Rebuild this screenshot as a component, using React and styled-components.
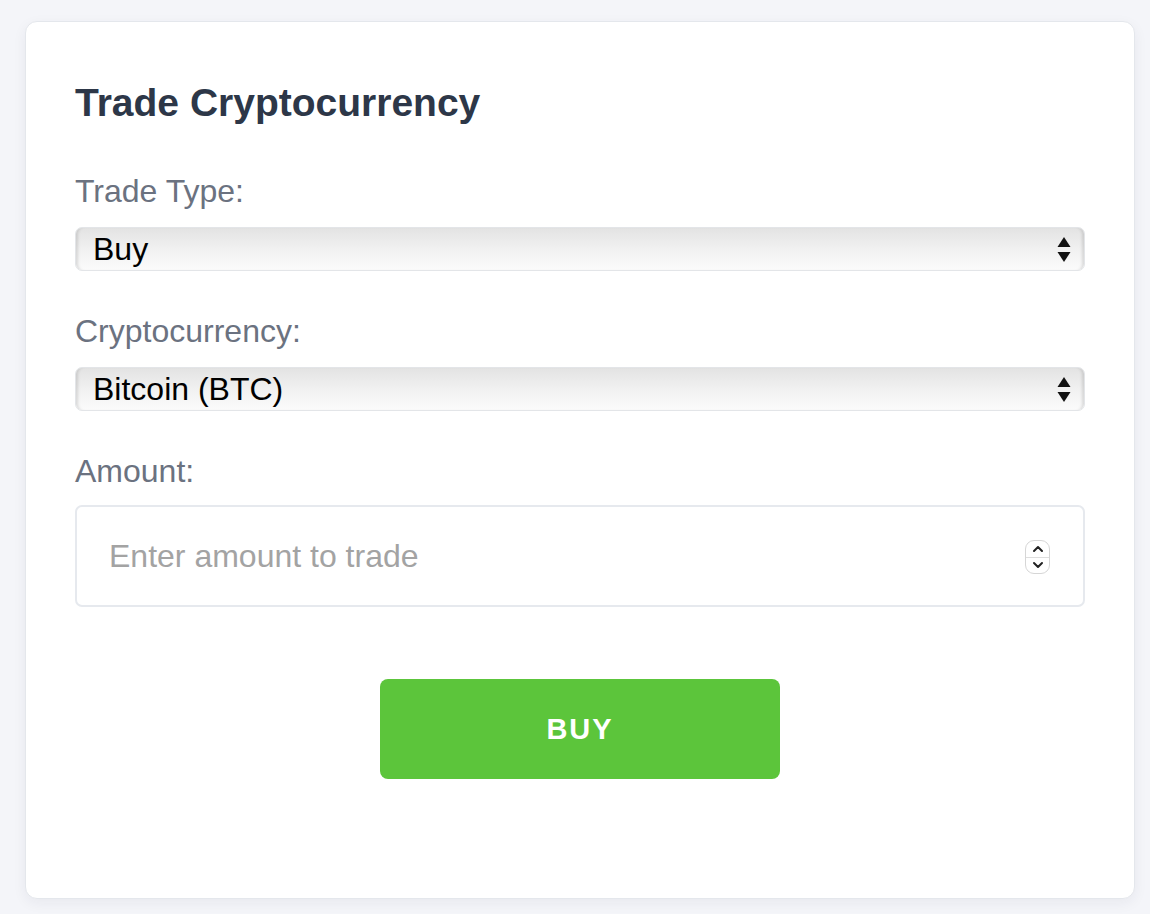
import React, { useState } from "react";
import styled, { createGlobalStyle } from "styled-components";

const GlobalStyle = createGlobalStyle`
  body {
    margin: 0;
    background-color: #f4f5f9;
    font-family: "Liberation Sans", Arial, sans-serif;
  }
`;

// Styled Components
const Page = styled.div`
  padding: 21px 15px 40px 25px;
`;

const Card = styled.div`
  width: 1010px;
  padding: 59px 49px 119px 49px;
  background-color: #fff;
  border: 1px solid #e4e7ec;
  border-radius: 12px;
  box-shadow: 0px 4px 14px rgba(30, 40, 70, 0.06);
`;

const Heading = styled.h2`
  margin: 0 0 48px 0;
  font-size: 39px;
  font-weight: 700;
  color: #2d3748;
`;

const Field = styled.div`
  margin-bottom: ${(props) => props.$gap || "42px"};
`;

const Label = styled.label`
  display: block;
  font-size: 32px;
  color: #6b7280;
  margin-bottom: ${(props) => props.$gap || "17px"};
`;

const SelectWrap = styled.div`
  position: relative;
`;

const Select = styled.select`
  appearance: none;
  -webkit-appearance: none;
  display: block;
  width: 100%;
  height: 44px;
  padding: 0 40px 0 17px;
  font-family: inherit;
  font-size: 32px;
  color: #000;
  border: 1px solid #e3e5e8;
  border-radius: 7px;
  background: linear-gradient(#e3e3e3, #f2f2f2 55%, #fbfbfb);
  box-shadow: inset 4px 0 3px -2px rgba(0, 0, 0, 0.12),
    inset -4px 0 3px -2px rgba(0, 0, 0, 0.12);
  outline: none;
`;

const Arrows = styled.svg`
  position: absolute;
  right: 13px;
  top: 9px;
  pointer-events: none;
`;

const InputWrap = styled.div`
  position: relative;
`;

const Input = styled.input`
  display: block;
  box-sizing: border-box;
  width: 100%;
  height: 102px;
  padding: 0 32px;
  font-family: inherit;
  font-size: 32px;
  color: #222;
  border: 2px solid #e6e9ee;
  border-radius: 7px;
  outline: none;

  &::placeholder {
    color: #a3a3a3;
  }

  &::-webkit-inner-spin-button,
  &::-webkit-outer-spin-button {
    -webkit-appearance: none;
    margin: 0;
  }
`;

const Spinner = styled.div`
  position: absolute;
  right: 35px;
  top: 35px;
  box-sizing: border-box;
  width: 25px;
  height: 34px;
  border: 1px solid #d6d6d6;
  border-radius: 9px;
  background: #fff;
  display: flex;
  flex-direction: column;
  pointer-events: none;
`;

const SpinHalf = styled.div`
  flex: 1;
  display: flex;
  align-items: center;
  justify-content: center;
  border-top: ${(props) => (props.$bottom ? "1px solid #dedede" : "none")};
`;

const ButtonRow = styled.div`
  display: flex;
  justify-content: center;
  margin-top: 72px;
`;

const BuyButton = styled.button`
  width: 400px;
  height: 100px;
  background-color: #5cc53b;
  color: #fff;
  border: none;
  border-radius: 8px;
  font-family: inherit;
  font-size: 29px;
  font-weight: 700;
  letter-spacing: 2px;
  cursor: pointer;
  transition: background-color 0.3s ease;

  &:hover {
    background-color: #4fb130;
  }
`;

const SelectArrows = () => (
  <Arrows width="16" height="28" viewBox="0 0 16 28">
    <path d="M8 1 L14.5 11 L1.5 11 Z" fill="#111" />
    <path d="M1.5 16 L14.5 16 L8 26 Z" fill="#111" />
  </Arrows>
);

const TradeForm = () => {
  const [tradeType, setTradeType] = useState("buy");
  const [coin, setCoin] = useState("btc");
  const [amount, setAmount] = useState("");

  return (
    <Page>
      <Card>
        <Heading>Trade Cryptocurrency</Heading>

        <Field>
          <Label>Trade Type:</Label>
          <SelectWrap>
            <Select value={tradeType} onChange={(e) => setTradeType(e.target.value)}>
              <option value="buy">Buy</option>
              <option value="sell">Sell</option>
            </Select>
            <SelectArrows />
          </SelectWrap>
        </Field>

        <Field>
          <Label>Cryptocurrency:</Label>
          <SelectWrap>
            <Select value={coin} onChange={(e) => setCoin(e.target.value)}>
              <option value="btc">Bitcoin (BTC)</option>
              <option value="eth">Ethereum (ETH)</option>
              <option value="ltc">Litecoin (LTC)</option>
            </Select>
            <SelectArrows />
          </SelectWrap>
        </Field>

        <Field $gap="0">
          <Label $gap="15px">Amount:</Label>
          <InputWrap>
            <Input
              type="number"
              placeholder="Enter amount to trade"
              value={amount}
              onChange={(e) => setAmount(e.target.value)}
            />
            <Spinner>
              <SpinHalf>
                <svg width="12" height="8" viewBox="0 0 12 8">
                  <path d="M2 6 L6 2 L10 6" fill="none" stroke="#222" strokeWidth="2" strokeLinecap="round" strokeLinejoin="round" />
                </svg>
              </SpinHalf>
              <SpinHalf $bottom>
                <svg width="12" height="8" viewBox="0 0 12 8">
                  <path d="M2 2 L6 6 L10 2" fill="none" stroke="#222" strokeWidth="2" strokeLinecap="round" strokeLinejoin="round" />
                </svg>
              </SpinHalf>
            </Spinner>
          </InputWrap>
        </Field>

        <ButtonRow>
          <BuyButton>{tradeType === "buy" ? "BUY" : "SELL"}</BuyButton>
        </ButtonRow>
      </Card>
    </Page>
  );
};

export default function App() {
  return (
    <>
      <GlobalStyle />
      <TradeForm />
    </>
  );
}
